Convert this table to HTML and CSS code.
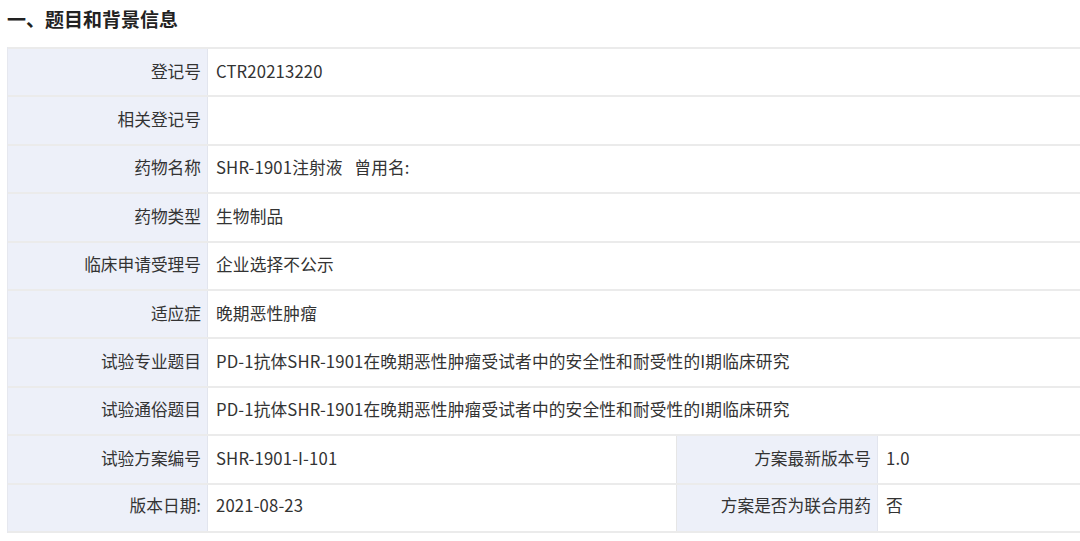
FILE: index.html
```html
<!DOCTYPE html>
<html lang="zh">
<head>
<meta charset="utf-8">
<link rel="stylesheet" href="styles.css">
</head>
<body>
<h2 class="title">一、题目和背景信息</h2>
<div class="table">
  <div class="row"><div class="label">登记号</div><div class="value">CTR20213220</div></div>
  <div class="row"><div class="label">相关登记号</div><div class="value"></div></div>
  <div class="row"><div class="label">药物名称</div><div class="value">SHR-1901注射液&nbsp;&nbsp;&nbsp;曾用名:</div></div>
  <div class="row"><div class="label">药物类型</div><div class="value">生物制品</div></div>
  <div class="row"><div class="label">临床申请受理号</div><div class="value">企业选择不公示</div></div>
  <div class="row"><div class="label">适应症</div><div class="value">晚期恶性肿瘤</div></div>
  <div class="row"><div class="label">试验专业题目</div><div class="value">PD-1抗体SHR-1901在晚期恶性肿瘤受试者中的安全性和耐受性的I期临床研究</div></div>
  <div class="row"><div class="label">试验通俗题目</div><div class="value">PD-1抗体SHR-1901在晚期恶性肿瘤受试者中的安全性和耐受性的I期临床研究</div></div>
  <div class="row four"><div class="label">试验方案编号</div><div class="value">SHR-1901-I-101</div><div class="label">方案最新版本号</div><div class="value">1.0</div></div>
  <div class="row four last"><div class="label">版本日期:</div><div class="value">2021-08-23</div><div class="label">方案是否为联合用药</div><div class="value">否</div></div>
</div>
</body>
</html>
```
FILE: styles.css
```css
html, body {
  margin: 0;
  padding: 0;
  background: #ffffff;
  overflow: hidden;
}
body {
  font-family: "Noto Sans CJK SC", "Microsoft YaHei", sans-serif;
  color: #333333;
}
.title {
  margin: 0;
  height: 47px;
  padding: 5px 0 0 7px;
  box-sizing: border-box;
  font-size: 19px;
  line-height: 28px;
  font-weight: bold;
  color: #222222;
}
.table {
  width: 1100px;
  margin-left: 7px;
  border-left: 1px solid #e6e8ef;
}
.row {
  display: grid;
  grid-template-columns: 200px 1fr;
  height: 48.4px;
  box-sizing: border-box;
  border-top: 2px solid #ebebeb;
}
.row.last {
  border-bottom: 2px solid #ebebeb;
  height: 50.4px;
}
.row.four {
  grid-template-columns: 200px 469px 201px 1fr;
}
.label {
  background: #edf0f9;
  padding-right: 6px;
  padding-bottom: 3px;
  border-right: 1px solid #e2e5ee;
  font-size: 16.7px;
  display: flex;
  align-items: center;
  justify-content: flex-end;
  white-space: nowrap;
}
.value {
  padding-left: 8px;
  padding-bottom: 3px;
  font-size: 16.7px;
  letter-spacing: 0.15px;
  display: flex;
  align-items: center;
  white-space: nowrap;
}
.row.last .label,
.row.last .value {
  padding-bottom: 5px;
}
.four .value:nth-child(2) {
  border-right: 1px solid #e6e6e6;
}
```
